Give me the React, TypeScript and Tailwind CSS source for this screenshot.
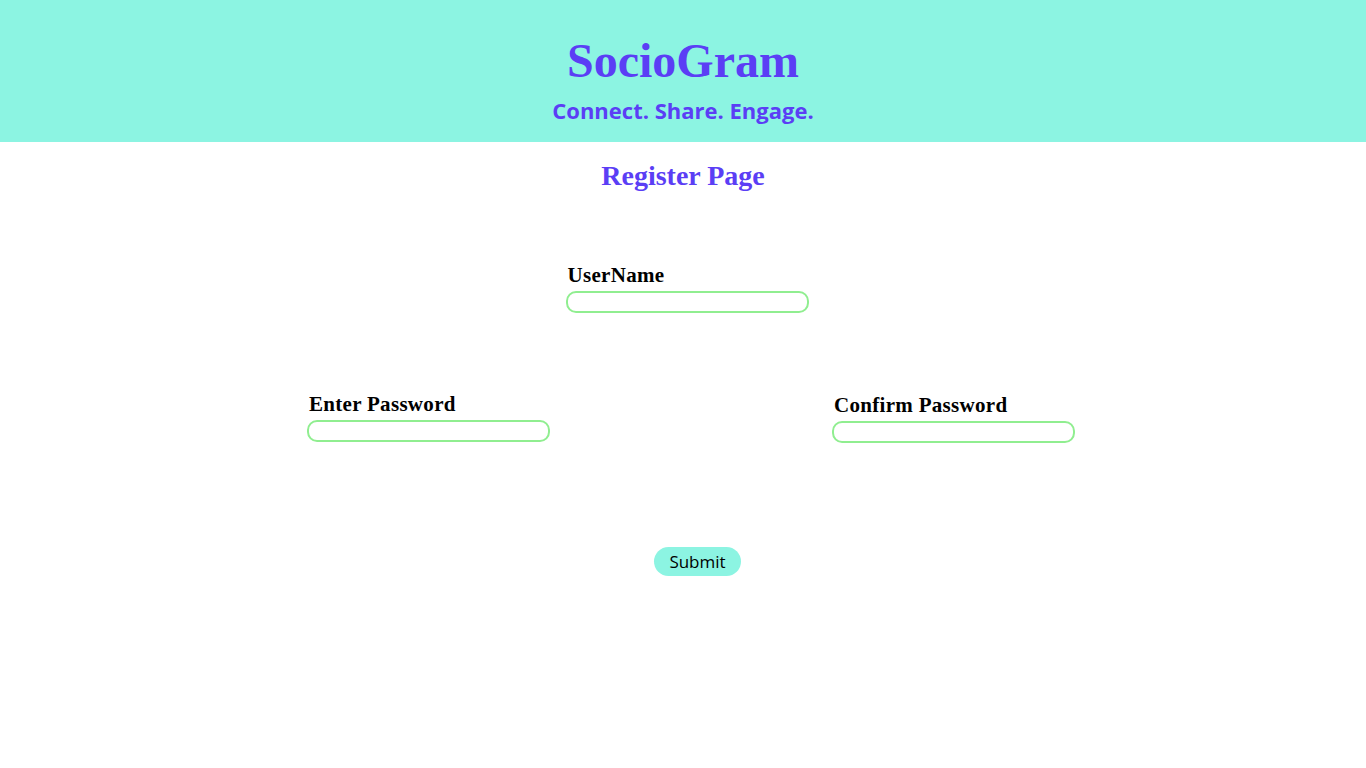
import React from "react";

const serif = "font-['Liberation_Serif','DejaVu_Serif',serif]";
const sans = "font-['Open_Sans','Noto_Sans',sans-serif]";

function Field({ label, id, type = "text" }: { label: string; id: string; type?: string }) {
  return (
    <div className="flex flex-col items-start">
      <label
        htmlFor={id}
        className={`${serif} text-[21px] leading-none font-bold tracking-[0.3px] text-black pl-[2px]`}
      >
        {label}
      </label>
      <input
        id={id}
        type={type}
        className="mt-[5px] w-[243px] h-[22px] rounded-[10px] border-2 border-[#90ee90] bg-white outline-none px-2"
      />
    </div>
  );
}

export default function App() {
  return (
    <div className="min-h-screen w-full bg-white">
      <header className="h-[142px] w-full bg-[#8cf4e2] flex flex-col items-center pt-[37px]">
        <h1 className={`${serif} text-[48px] leading-none font-bold text-[#5b3ef5]`}>SocioGram</h1>
        <p className={`${sans} mt-[14px] text-[22px] leading-none font-bold text-[#5b3ef5]`}>
          Connect. Share. Engage.
        </p>
      </header>

      <main className="flex flex-col items-center">
        <h2 className={`${serif} mt-[20px] text-[28px] leading-none font-bold text-[#5b3ef5]`}>
          Register Page
        </h2>

        <form className="w-full flex flex-col items-center">
          <div className="mt-[75px] pl-[8px]">
            <Field label="UserName" id="username" />
          </div>

          <div className="mt-[81px] w-[768px] ml-[16px] flex justify-between items-start">
            <Field label="Enter Password" id="password" type="password" />
            <div className="mt-[1px]">
              <Field label="Confirm Password" id="confirm" type="password" />
            </div>
          </div>

          <div className="mt-[104px] pl-[29px]">
            <button
              type="button"
              className={`${sans} h-[29px] px-[15px] rounded-full bg-[#8cf4e2] text-[17px] leading-none text-black`}
            >
              Submit
            </button>
          </div>
        </form>
      </main>
    </div>
  );
}
